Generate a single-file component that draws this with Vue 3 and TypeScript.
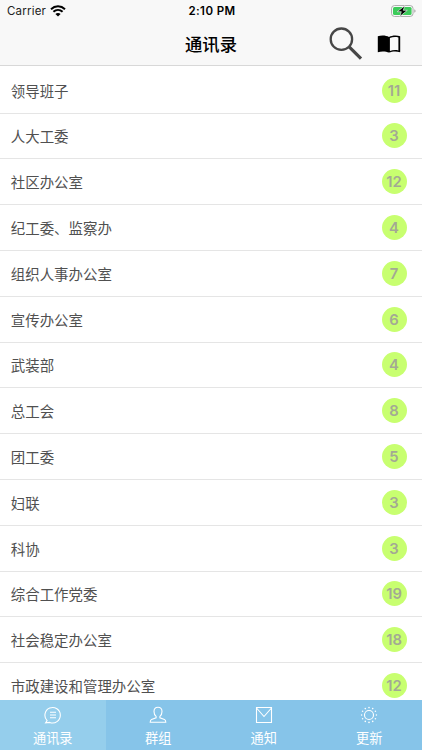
<script setup lang="ts">
interface Department {
  name: string
  count: number
}

const departments: Department[] = [
  { name: '领导班子', count: 11 },
  { name: '人大工委', count: 3 },
  { name: '社区办公室', count: 12 },
  { name: '纪工委、监察办', count: 4 },
  { name: '组织人事办公室', count: 7 },
  { name: '宣传办公室', count: 6 },
  { name: '武装部', count: 4 },
  { name: '总工会', count: 8 },
  { name: '团工委', count: 5 },
  { name: '妇联', count: 3 },
  { name: '科协', count: 3 },
  { name: '综合工作党委', count: 19 },
  { name: '社会稳定办公室', count: 18 },
  { name: '市政建设和管理办公室', count: 12 },
]

const tabs = [
  { id: 'contacts', label: '通讯录' },
  { id: 'groups', label: '群组' },
  { id: 'notices', label: '通知' },
  { id: 'updates', label: '更新' },
]
const activeTab = 'contacts'

// Twelve dots spaced evenly around the sun
const rays = Array.from({ length: 12 }, (_, i) => {
  const a = (i * Math.PI) / 6
  return { x: 9 + 7.4 * Math.cos(a), y: 9 + 7.4 * Math.sin(a) }
})
</script>

<template>
  <div class="screen">
    <header class="header">
      <div class="status">
        <div class="carrier">
          <span>Carrier</span>
          <svg class="wifi" viewBox="0 0 16 12" width="16" height="12">
            <path d="M1 4.2C5 .4 11 .4 15 4.2" />
            <path d="M3.4 6.8c2.7-2.5 6.5-2.5 9.2 0" />
            <path class="dot" d="M8 11.4 5.4 8.9c1.5-1.3 3.7-1.3 5.2 0z" />
          </svg>
        </div>
        <span class="time">2:10 PM</span>
        <svg class="battery" viewBox="0 0 26 12" width="26" height="12">
          <rect x=".6" y=".6" width="21.4" height="10.8" rx="2.8" fill="#fff" stroke="#a8a8a8" />
          <rect x="2" y="2" width="18.6" height="8" rx="1.5" fill="#3ccb5a" />
          <path d="M23.4 4.2v3.6c1.5-.6 1.5-3 0-3.6z" fill="#999" />
          <path d="M13.8.7 6.3 6.7h4L8.8 11.5l7.5-6.2h-4z" fill="#000" stroke="#fff" stroke-width=".6" />
        </svg>
      </div>
      <div class="navbar">
        <h1>通讯录</h1>
        <div class="actions">
          <svg viewBox="0 0 34 34" width="34" height="34" fill="none" stroke="#474747">
            <circle cx="12.4" cy="12.2" r="10.7" stroke-width="2.3" />
            <path d="m20.2 19.8 11.8 11.8" stroke-width="3.2" />
          </svg>
          <svg viewBox="0 0 24 20" width="24" height="20">
            <path d="M12 3C9.2 1.2 4 1 .8 2.3v15.9c3.4-1.2 8.1-1.1 11.2.4 3.1-1.5 7.8-1.6 11.2-.4V2.3C20 1 14.8 1.2 12 3z" />
            <path d="M12.9 4.1c2.4-1.1 5.9-1.3 8.5-.6v12.9c-2.7-.6-6-.4-8.5.5z" fill="#f8f8f8" />
          </svg>
        </div>
      </div>
    </header>

    <main class="list">
      <div v-for="department in departments" :key="department.name" class="row">
        <span>{{ department.name }}</span>
        <span class="count">{{ department.count }}</span>
      </div>
    </main>

    <nav class="tabs">
      <div v-for="tab in tabs" :key="tab.id" class="tab" :class="{ active: tab.id === activeTab }">
        <svg viewBox="0 0 18 18" width="18" height="18">
          <template v-if="tab.id === 'contacts'">
            <path d="M3.1 14.6A7.7 7.7 0 1 1 5.8 16.4L1.6 16.9z" />
            <path d="M6 6.2h6M6 9h6M6 11.8h6" />
          </template>
          <template v-else-if="tab.id === 'groups'">
            <path d="M9 1.2c-2.5 0-4 1.7-4 4.2 0 2.1.8 3.9 2.1 5v1.4L2.5 13.5c-1 .4-1.3 1.3-1.3 2.8h15.6c0-1.5-.3-2.4-1.3-2.8l-4.6-1.7v-1.4c1.3-1.1 2.1-2.9 2.1-5 0-2.5-1.5-4.2-4-4.2z" />
          </template>
          <template v-else-if="tab.id === 'notices'">
            <path d="M1.5 1.5h15v15h-15zM1.5 2l7.5 8.5L16.5 2" />
          </template>
          <template v-else>
            <circle cx="9" cy="9" r="4.5" />
            <circle v-for="(ray, i) in rays" :key="i" class="ray" :cx="ray.x" :cy="ray.y" r=".8" />
          </template>
        </svg>
        <span>{{ tab.label }}</span>
      </div>
    </nav>
  </div>
</template>

<style>
body {
  margin: 0;
  overflow: hidden;
}
</style>

<style scoped>
.screen {
  display: flex;
  flex-direction: column;
  height: 750px;
  background: #fff;
  color: #505050;
  font-family: 'Noto Sans CJK SC', sans-serif;
  overflow: hidden;
}
.header {
  box-sizing: border-box;
  flex: none;
  height: 66px;
  background: #f8f8f8;
  border-bottom: 1px solid #d8d8d8;
  color: #000;
}
.status {
  display: grid;
  grid-template-columns: 1fr auto 1fr;
  align-items: center;
  height: 22px;
  padding: 0 5px 0 7px;
  font: 11.5px/22px Inter, sans-serif;
  letter-spacing: 0.2px;
}
.carrier {
  display: flex;
  align-items: center;
  gap: 4px;
  color: #222;
}
.wifi {
  fill: none;
  stroke: #000;
  stroke-width: 2;
}
.wifi .dot {
  fill: #000;
  stroke: none;
}
.time {
  font-weight: 600;
  letter-spacing: 0.4px;
}
.battery {
  justify-self: end;
}
.navbar {
  display: grid;
  grid-template-columns: 1fr auto 1fr;
  align-items: center;
  height: 43px;
}
h1 {
  grid-column: 2;
  margin: 0;
  font-size: 17.3px;
  font-weight: 500;
  line-height: 41px;
}
.actions {
  display: flex;
  align-items: center;
  justify-content: flex-end;
  gap: 14px;
  padding-right: 21px;
}
.list {
  flex: 1;
  min-height: 0;
  padding-top: 1.8px;
  overflow: hidden;
}
.row {
  box-sizing: border-box;
  display: flex;
  align-items: center;
  justify-content: space-between;
  height: 45.8px;
  padding: 0 15.5px 0 10.8px;
  border-bottom: 1px solid #e5e5e5;
  font-size: 14.45px;
}
.count {
  width: 25px;
  height: 25px;
  border-radius: 50%;
  background: #c8ff70;
  color: #a3a994;
  font: 600 14.8px/27px Inter, sans-serif;
  text-align: center;
}
.tabs {
  flex: none;
  display: grid;
  grid-template-columns: repeat(4, 1fr);
  height: 50px;
  background: #86c4e9;
  color: #fff;
}
.tab {
  display: flex;
  flex-direction: column;
  align-items: center;
  padding-top: 6px;
  font-size: 13.2px;
  line-height: 20px;
  gap: 4px;
}
.tab.active {
  background: #95ceec;
}
.tab svg {
  fill: none;
  stroke: #fff;
  stroke-width: 1.1;
}
.tab .ray {
  fill: #fff;
  stroke: none;
}
</style>
